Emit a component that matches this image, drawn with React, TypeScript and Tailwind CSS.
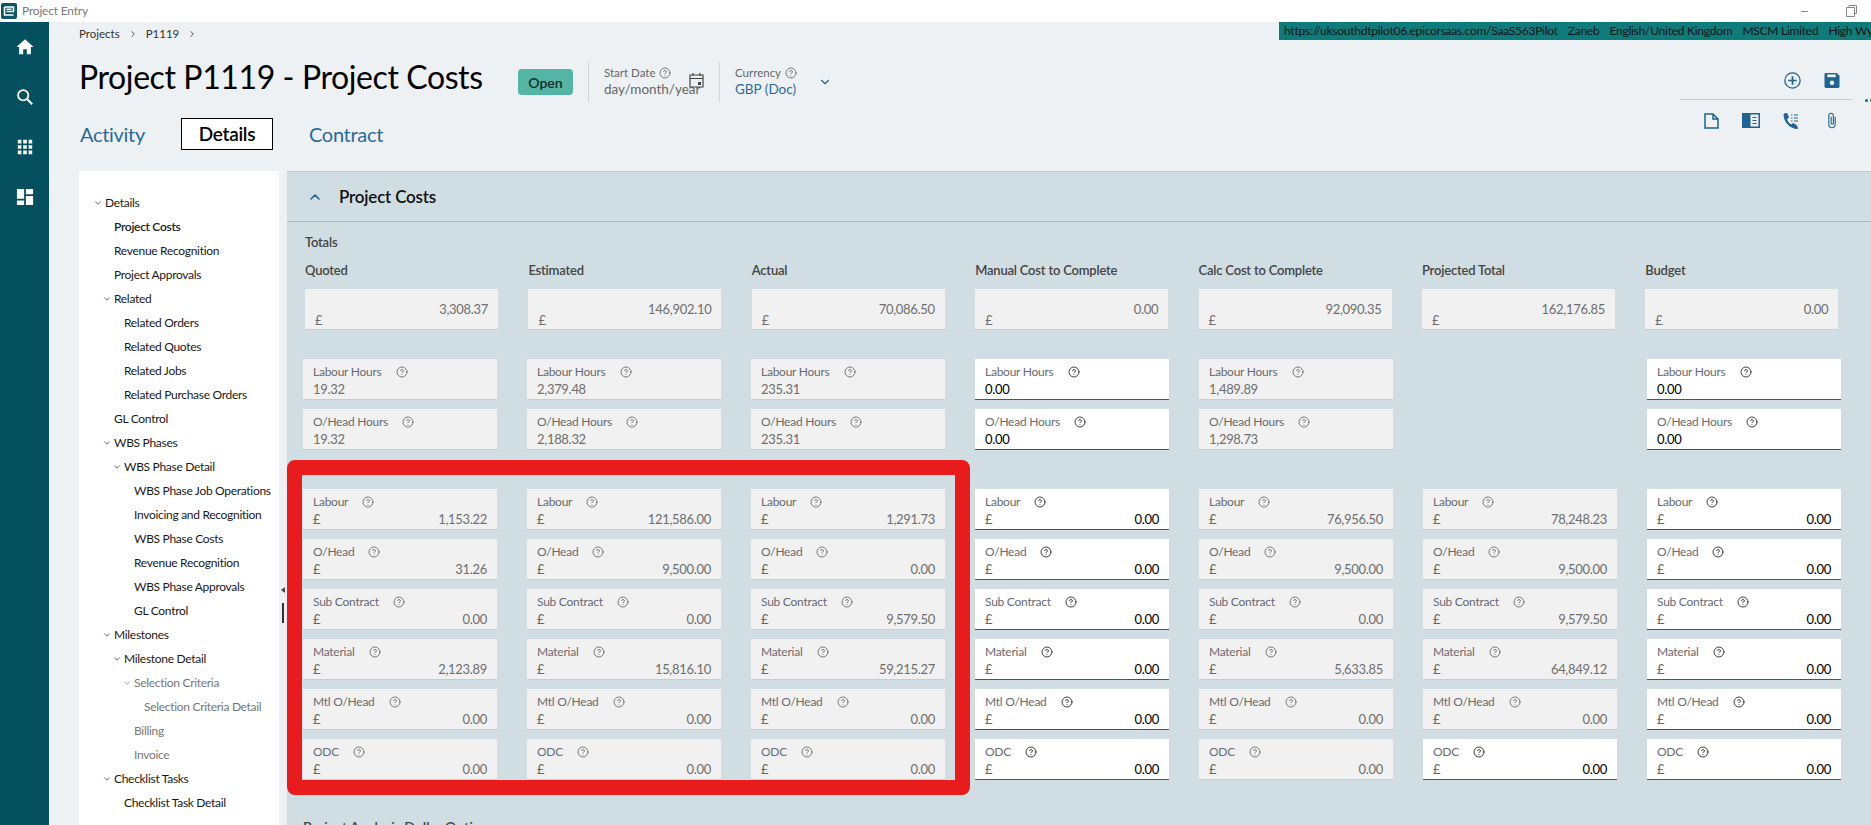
import { ChevronDown, ChevronRight, ChevronUp, CircleHelp, Minus } from "lucide-react";

type Cell = { value: string; edit?: boolean } | null;

const FONT = "font-['Lato','Noto_Sans',sans-serif]";

const totals = [
    { title: "Quoted", value: "3,308.37" },
    { title: "Estimated", value: "146,902.10" },
    { title: "Actual", value: "70,086.50" },
    { title: "Manual Cost to Complete", value: "0.00" },
    { title: "Calc Cost to Complete", value: "92,090.35" },
    { title: "Projected Total", value: "162,176.85" },
    { title: "Budget", value: "0.00" },
];

const e = (value: string): Cell => ({ value, edit: true });
const r = (value: string): Cell => ({ value });

const hourRows: { label: string; cells: Cell[] }[] = [
    { label: "Labour Hours", cells: [r("19.32"), r("2,379.48"), r("235.31"), e("0.00"), r("1,489.89"), null, e("0.00")] },
    { label: "O/Head Hours", cells: [r("19.32"), r("2,188.32"), r("235.31"), e("0.00"), r("1,298.73"), null, e("0.00")] },
];

const costRows: { label: string; cells: Cell[] }[] = [
    { label: "Labour", cells: [r("1,153.22"), r("121,586.00"), r("1,291.73"), e("0.00"), r("76,956.50"), r("78,248.23"), e("0.00")] },
    { label: "O/Head", cells: [r("31.26"), r("9,500.00"), r("0.00"), e("0.00"), r("9,500.00"), r("9,500.00"), e("0.00")] },
    { label: "Sub Contract", cells: [r("0.00"), r("0.00"), r("9,579.50"), e("0.00"), r("0.00"), r("9,579.50"), e("0.00")] },
    { label: "Material", cells: [r("2,123.89"), r("15,816.10"), r("59,215.27"), e("0.00"), r("5,633.85"), r("64,849.12"), e("0.00")] },
    { label: "Mtl O/Head", cells: [r("0.00"), r("0.00"), r("0.00"), e("0.00"), r("0.00"), r("0.00"), e("0.00")] },
    { label: "ODC", cells: [r("0.00"), r("0.00"), r("0.00"), e("0.00"), r("0.00"), e("0.00"), e("0.00")] },
];

const navItems: { label: string; depth: number; open?: boolean; bold?: boolean; muted?: boolean }[] = [
    { label: "Details", depth: 0, open: true },
    { label: "Project Costs", depth: 1, bold: true },
    { label: "Revenue Recognition", depth: 1 },
    { label: "Project Approvals", depth: 1 },
    { label: "Related", depth: 1, open: true },
    { label: "Related Orders", depth: 2 },
    { label: "Related Quotes", depth: 2 },
    { label: "Related Jobs", depth: 2 },
    { label: "Related Purchase Orders", depth: 2 },
    { label: "GL Control", depth: 1 },
    { label: "WBS Phases", depth: 1, open: true },
    { label: "WBS Phase Detail", depth: 2, open: true },
    { label: "WBS Phase Job Operations", depth: 3 },
    { label: "Invoicing and Recognition", depth: 3 },
    { label: "WBS Phase Costs", depth: 3 },
    { label: "Revenue Recognition", depth: 3 },
    { label: "WBS Phase Approvals", depth: 3 },
    { label: "GL Control", depth: 3 },
    { label: "Milestones", depth: 1, open: true },
    { label: "Milestone Detail", depth: 2, open: true },
    { label: "Selection Criteria", depth: 3, open: true, muted: true },
    { label: "Selection Criteria Detail", depth: 4, muted: true },
    { label: "Billing", depth: 3, muted: true },
    { label: "Invoice", depth: 3, muted: true },
    { label: "Checklist Tasks", depth: 1, open: true },
    { label: "Checklist Task Detail", depth: 2 },
];

// indents per depth: text starts 26px in for depth 0, about 10px more each level
const indentClass = ["pl-[26px]", "pl-[35px]", "pl-[45px]", "pl-[55px]", "pl-[65px]"];

function NavRow({ item }: { item: (typeof navItems)[number] }) {
    return (
        <div className={`relative h-6 flex items-center text-[12px] tracking-[-0.3px] ${indentClass[item.depth]} ${item.bold ? "font-semibold text-[#222]" : item.muted ? "text-[#777]" : "text-[#1a1a1a]"}`}>
            {item.open && <ChevronDown size={10} strokeWidth={1.6} className="-ml-[12px] mr-[2px] shrink-0" />}
            <span className="whitespace-nowrap">{item.label}</span>
        </div>
    );
}

function Help({ dark }: { dark?: boolean }) {
    return <CircleHelp size={12} strokeWidth={1.7} className={dark ? "text-[#222]" : "text-[#666]"} />;
}

function Field({ label, cell, money }: { label: string; cell: Cell; money?: boolean }) {
    if (!cell) return <div />;
    return (
        <div className={`h-[41px] px-[10px] pt-[4px] border-b ${cell.edit ? "bg-white border-[#1f6390]" : "bg-[#f1f1f1] border-[#c9cccd]"}`}>
            <div className="flex items-center gap-[14px] h-[17px] text-[12px] tracking-[-0.25px] leading-none text-[#6b6b72]">
                <span>{label}</span>
                <Help dark={cell.edit} />
            </div>
            <div className="flex justify-between items-center h-[18px] text-[13px] tracking-[-0.3px] leading-none">
                {money && <span className="text-[#666]">£</span>}
                <span className={cell.edit ? "text-black" : "text-[#6e6e6e]"}>{cell.value}</span>
            </div>
        </div>
    );
}

function RailIcon({ children }: { children: React.ReactNode }) {
    return <svg width="18" height="18" viewBox="0 0 20 20" className="text-white">{children}</svg>;
}

export default function App() {
    return (
        <div className={`w-[1871px] h-[825px] overflow-hidden flex flex-col bg-white ${FONT}`}>
            <div className="h-[22px] shrink-0 flex items-center pl-[1px] pr-[14px] text-[12px] tracking-[-0.2px] text-[#7a7a7a]">
                <svg width="16" height="16" viewBox="0 0 16 16">
                    <rect width="16" height="16" rx="2" fill="#0b5566" />
                    <path d="M3.5 4h9v4.5h-7M5.5 6.2h5M3.5 4v8h9" fill="none" stroke="#fff" strokeWidth="1.6" />
                </svg>
                <span className="ml-[5px]">Project Entry</span>
                <Minus size={11} className="ml-auto mr-[36px] text-[#888]" />
                <svg width="11" height="12" viewBox="0 0 11 12" fill="none" stroke="#888">
                    <path d="M3 2.5V.5h7.5v8H8.5M.5 2.5h8v9h-8z" />
                </svg>
            </div>

            <div className="flex flex-1 min-h-0">
                <aside className="w-[49px] shrink-0 bg-[#05505f] flex flex-col items-center pt-[16px] gap-[32px]">
                    <RailIcon>
                        <path d="M10 1.5 0.5 10H3.5V18H8V12.5H12V18H16.5V10H19.5Z" fill="currentColor" />
                    </RailIcon>
                    <RailIcon>
                        <circle cx="8" cy="8" r="5.7" fill="none" stroke="currentColor" strokeWidth="2" />
                        <path d="M12.2 12.2 18 18" stroke="currentColor" strokeWidth="2.2" />
                    </RailIcon>
                    <RailIcon>
                        <path d="M2 2h4v4H2zM8 2h4v4H8zM14 2h4v4h-4zM2 8h4v4H2zM8 8h4v4H8zM14 8h4v4h-4zM2 14h4v4H2zM8 14h4v4H8zM14 14h4v4h-4z" fill="currentColor" />
                    </RailIcon>
                    <RailIcon>
                        <path d="M1 1h8v11H1zM11 1h8v6h-8zM11 9h8v10h-8zM1 14h8v5H1z" fill="currentColor" />
                    </RailIcon>
                </aside>

                <main className="flex-1 min-w-0 relative bg-[#edf1f4] flex flex-col">
                    <div className="absolute right-0 top-0 w-[592px] h-[18px] bg-[#0e7c7b] flex items-center pl-[5px] gap-[10px] text-[12px] tracking-[-0.25px] text-[#111] whitespace-nowrap overflow-hidden">
                        <span>https://uksouthdtpilot06.epicorsaas.com/SaaS563Pilot</span>
                        <span>Zaneb</span>
                        <span>English/United Kingdom</span>
                        <span>MSCM Limited</span>
                        <span>High Wycombe</span>
                    </div>

                    <header className="h-[149px] shrink-0 flex pl-[30px]">
                        <div className="flex-1">
                            <div className="flex items-center h-6 text-[11.5px] text-[#333]">
                                <span>Projects</span>
                                <ChevronRight size={10} className="mx-[8px]" />
                                <span>P1119</span>
                                <ChevronRight size={10} className="mx-[8px]" />
                            </div>
                            <div className="flex items-center mt-[16px] h-10">
                                <h1 className="text-[32px] leading-none tracking-[-0.4px] text-black w-[439px] whitespace-nowrap pb-[10px]">Project P1119 - Project Costs</h1>
                                <span className="w-[55px] h-[26px] rounded-[4px] bg-[#54b5a5] flex items-center justify-center text-[14px] font-semibold text-[#0f2b28]">Open</span>
                                <div className="ml-[15px] border-l border-[#cfd4d8] h-10 pl-[15px] w-[131px] relative">
                                    <div className="flex items-center gap-[4px] text-[11.5px] text-[#666] h-[18px] pt-[4px]">Start Date <Help /></div>
                                    <div className="text-[13.5px] text-[#666] whitespace-nowrap leading-[18px]">day/month/year</div>
                                    <svg width="15" height="16" viewBox="0 0 15 16" fill="none" stroke="#444" strokeWidth="1.2" className="absolute left-[100px] top-[10px]">
                                        <path d="M1 3h13v12H1zM1 6.5h13M4 1v3M11 1v3" />
                                        <rect x="9" y="10" width="3" height="3" fill="#444" stroke="none" />
                                    </svg>
                                </div>
                                <div className="border-l border-[#cfd4d8] h-10 pl-[15px] w-[99px]">
                                    <div className="flex items-center gap-[4px] text-[11.5px] text-[#666] h-[18px] pt-[4px]">Currency <Help /></div>
                                    <div className="text-[13.5px] text-[#2a6a9a] whitespace-nowrap leading-[18px]">GBP (Doc)</div>
                                </div>
                                <ChevronDown size={14} strokeWidth={2} className="text-[#1f6390]" />
                            </div>
                            <div className="flex items-center mt-[16px] text-[20px] tracking-[-0.3px] text-[#2a6a9a]">
                                <span className="w-[102px] pl-[1px]">Activity</span>
                                <span className="w-[92px] h-8 bg-white border border-black flex items-center justify-center text-[19px] font-semibold text-black">Details</span>
                                <span className="ml-[36px]">Contract</span>
                            </div>
                        </div>
                        <div className="w-[191px] shrink-0 pt-[50px] relative text-[#1f6390]">
                            <div className="flex justify-end gap-[23px] pr-[12px] h-[28px] border-b border-[#c9cccd] w-[172px]">
                                <svg width="17" height="17" viewBox="0 0 16 16" fill="none" stroke="currentColor" strokeWidth="1.2">
                                    <circle cx="8" cy="8" r="7.2" />
                                    <path d="M8 4v8M4 8h8" strokeWidth="1.6" />
                                </svg>
                                <svg width="16" height="15" viewBox="0 0 16 16" className="mt-[1px]">
                                    <path d="M0 1.5A1.5 1.5 0 0 1 1.5 0H13l3 3v11.5a1.5 1.5 0 0 1-1.5 1.5h-13A1.5 1.5 0 0 1 0 14.5Z" fill="currentColor" />
                                    <rect x="3" y="1.5" width="9" height="3" fill="#edf1f4" />
                                    <circle cx="8" cy="10.5" r="2.5" fill="#edf1f4" />
                                </svg>
                            </div>
                            <div className="absolute left-[185px] top-[77px] flex gap-[2px]">
                                <i className="block w-[3px] h-[3px] rounded-full bg-[#1f6390]" />
                                <i className="block w-[3px] h-[3px] rounded-full bg-[#1f6390]" />
                            </div>
                            <div className="flex justify-end gap-[23px] pr-[15px] pt-[12px] items-center w-[172px]">
                                <svg width="15" height="16" viewBox="0 0 15 16" fill="none" stroke="currentColor" strokeWidth="1.5">
                                    <path d="M1 1h8l5 5v9H1zM9 1v5h5" />
                                </svg>
                                <svg width="18" height="15" viewBox="0 0 18 15">
                                    <path d="M0 0h18v15H0z" fill="currentColor" />
                                    <path d="M8.5 1.5h8v12h-8z" fill="#edf1f4" />
                                    <path d="M10.5 4.5h4M10.5 7.5h4M10.5 10.5h4" stroke="currentColor" />
                                </svg>
                                <svg width="16" height="16" viewBox="0 0 16 16" fill="none" stroke="currentColor">
                                    <path d="M1 1 4 .6 5.5 4.5 3.6 6C4.2 8.5 5.8 10.5 8.2 12L10 10.5 13.5 12.5 14.5 15.5C7 15.5 1 9 1 1Z" fill="currentColor" />
                                    <path d="M8 2h1.5M8 5h1.5M8 8h1.5M11 2h4M11 5h4M11 8h4" />
                                </svg>
                                <svg width="10" height="17" viewBox="0 0 11 18" fill="none" stroke="currentColor" strokeWidth="1.2" className="ml-[5px]">
                                    <path d="M9 5v8.5a3.5 3.5 0 0 1-7 0V3.5a2.5 2.5 0 0 1 5 0V12a1.2 1.2 0 0 1-2.4 0V5" />
                                </svg>
                            </div>
                        </div>
                    </header>

                    <div className="flex-1 min-h-0 flex pl-[30px] gap-[8px]">
                        <nav className="w-[200px] shrink-0 bg-white pt-[20px] relative">
                            {navItems.map((item, i) => <NavRow key={i} item={item} />)}
                            <span className="absolute left-[202px] top-[416px] w-0 h-0 border-y-[3px] border-y-transparent border-r-[4px] border-r-[#444]" />
                            <span className="absolute left-[203px] top-[432px] w-[2px] h-[20px] bg-[#333]" />
                        </nav>

                        <section className="flex-1 min-w-0 bg-[#d0dde2] border-t border-[#bcc8cc] relative">
                            <div className="h-[50px] flex items-center border-b border-[#9dbdc0] pl-[20px]">
                                <ChevronUp size={16} strokeWidth={2.4} className="text-[#1f6390]" />
                                <h2 className="ml-[16px] text-[17px] font-semibold tracking-[-0.2px] text-[#111]">Project Costs</h2>
                            </div>
                            <div className="pl-[16px]">
                                <div className="pl-[2px] pt-[11px] h-[38px] text-[13px] font-semibold tracking-[-0.2px] text-[#444]">Totals</div>
                                <div className="grid grid-cols-[repeat(7,193.4px)] gap-x-[30px] pl-[2px]">
                                    {totals.map((t) => (
                                        <div key={t.title}>
                                            <div className="h-[21px] pt-[1px] text-[13px] font-semibold tracking-[-0.2px] text-[#444] whitespace-nowrap">{t.title}</div>
                                            <div className="mt-[8px] h-[41px] w-[193px] bg-[#f1f1f1] border-b border-[#c9cccd] px-[10px] text-[13px] tracking-[-0.3px] text-[#6e6e6e]">
                                                <div className="text-right pt-[11px] leading-[18px]">{t.value}</div>
                                                <div className="leading-[14px] -mt-[5px]">£</div>
                                            </div>
                                        </div>
                                    ))}
                                </div>
                                <div className="mt-[29px] grid grid-cols-[repeat(7,194px)] gap-x-[30px] gap-y-[9px]">
                                    {hourRows.map((row) => row.cells.map((cell, i) => <Field key={row.label + i} label={row.label} cell={cell} />))}
                                </div>
                                <div className="mt-[39px] grid grid-cols-[repeat(7,194px)] gap-x-[30px] gap-y-[9px]">
                                    {costRows.map((row) => row.cells.map((cell, i) => <Field key={row.label + i} label={row.label} cell={cell} money />))}
                                </div>
                                <div className="mt-[36px] text-[14px] font-semibold text-[#444]">Project Analysis Dollar Options</div>
                            </div>
                            {/* annotation drawn over the screenshot */}
                            <div className="absolute left-0 top-[288px] w-[683px] h-[335px] border-[15px] border-[#e81c1c] rounded-[8px] pointer-events-none" />
                        </section>
                    </div>
                </main>
            </div>
        </div>
    );
}
